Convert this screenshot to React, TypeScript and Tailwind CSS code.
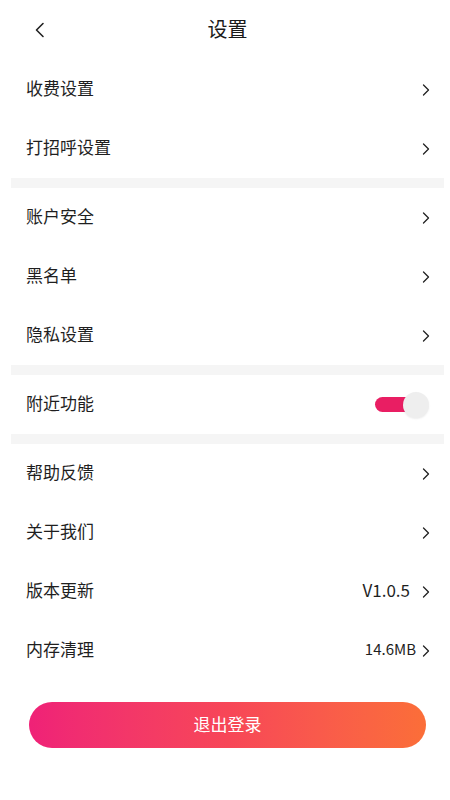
import { useState } from 'react';

const font = { fontFamily: '"Noto Sans CJK SC", "Noto Sans", sans-serif' };

function Chevron() {
  return (
    <svg width="8" height="12" viewBox="0 0 8 12" fill="none" className="shrink-0">
      <path d="M1.5 1L6.5 6L1.5 11" stroke="#222" strokeWidth="1.3" strokeLinecap="round" strokeLinejoin="round" />
    </svg>
  );
}

interface RowProps {
  label: string;
  value?: string;
  small?: boolean;
}

function Row({ label, value, small }: RowProps) {
  return (
    <div className="flex items-center justify-between h-[59px] pl-[26px] pr-[20px]">
      <span className="text-[17px] text-[#1f1f1f] -mt-[3px]">{label}</span>
      <div className="flex items-center">
        {value && (
          <span className={small ? 'text-[15px] text-[#1f1f1f] mr-[6px] -mt-[2px]' : 'text-[17px] text-[#1f1f1f] mr-[12px] -mt-[3px]'}>
            {value}
          </span>
        )}
        <Chevron />
      </div>
    </div>
  );
}

function Divider() {
  return <div className="h-[10px] ml-[11px] w-[433px] bg-[#f5f5f5]" />;
}

export default function App() {
  const [nearby, setNearby] = useState(true);

  return (
    <div className="w-[450px] h-[800px] bg-white" style={font}>
      {/* Header */}
      <div className="relative flex items-center justify-center h-[60px] pb-[2px]">
        <button className="absolute left-[34px] top-[22px]">
          <svg width="12" height="16" viewBox="0 0 12 16" fill="none">
            <path d="M9 1.5L2.5 8L9 14.5" stroke="#222" strokeWidth="1.6" strokeLinecap="round" strokeLinejoin="round" />
          </svg>
        </button>
        <h1 className="text-[20px] font-normal text-[#1a1a1a] pl-[5px]">设置</h1>
      </div>

      <Row label="收费设置" />
      <Row label="打招呼设置" />
      <Divider />
      <Row label="账户安全" />
      <Row label="黑名单" />
      <Row label="隐私设置" />
      <Divider />
      <div className="flex items-center justify-between h-[59px] pl-[26px] pr-[21px]">
        <span className="text-[17px] text-[#1f1f1f] -mt-[3px]">附近功能</span>
        <button onClick={() => setNearby(!nearby)} className="relative w-[54px] h-[26px] flex items-center">
          <span className={nearby ? 'absolute left-0 w-[42px] h-[15px] rounded-full bg-[#e91e63]' : 'absolute left-0 w-[42px] h-[15px] rounded-full bg-[#d4d4d4]'} />
          <span
            className={
              nearby
                ? 'absolute right-0 w-[26px] h-[26px] rounded-full bg-[#eeeeee] shadow-[0_1px_2px_rgba(0,0,0,0.08)]'
                : 'absolute left-0 w-[26px] h-[26px] rounded-full bg-[#eeeeee] shadow-[0_1px_2px_rgba(0,0,0,0.08)]'
            }
          />
        </button>
      </div>
      <Divider />
      <Row label="帮助反馈" />
      <Row label="关于我们" />
      <Row label="版本更新" value="V1.0.5" />
      <Row label="内存清理" value="14.6MB" small />

      <div className="pl-[29px] pt-[22px]">
        <button className="w-[397px] h-[46px] rounded-full bg-gradient-to-r from-[#ef2177] via-[#f74657] to-[#fb6e38] text-white text-[17px] pb-[2px]">
          退出登录
        </button>
      </div>
    </div>
  );
}
